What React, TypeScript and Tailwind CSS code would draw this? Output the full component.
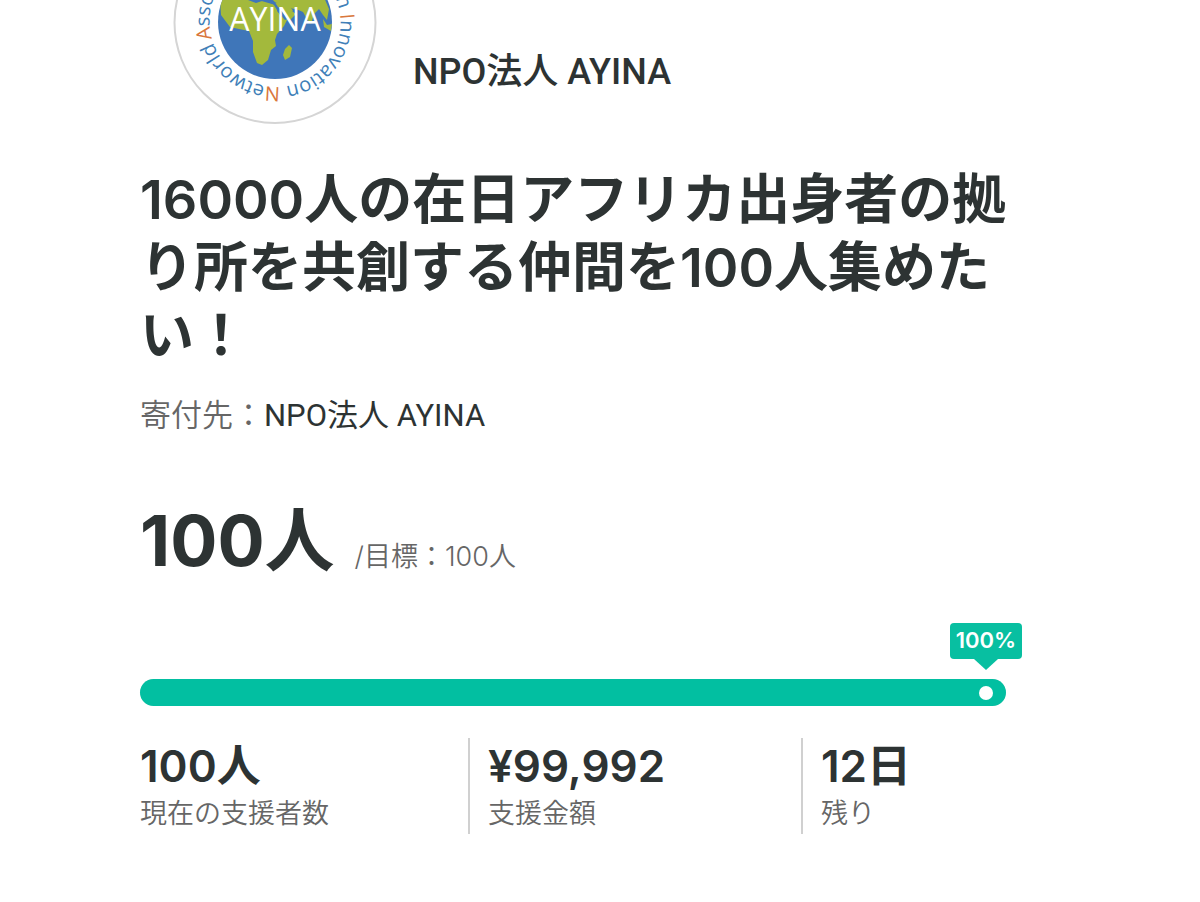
const supporters = 100;
const goal = 100;
const percent = Math.round((supporters / goal) * 100);

const stats = [
  { label: '現在の支援者数', value: '100人' },
  { label: '支援金額', value: '¥99,992' },
  { label: '残り', value: '12日' },
];

function Logo() {
  return (
    <svg className="h-[125px] w-[204px] shrink-0" viewBox="0 79 204 125" role="img" aria-label="AYINA">
      <defs>
        <clipPath id="globe">
          <circle cx="102" cy="101" r="57" />
        </clipPath>
        {/* Ring baseline, starting at -60 degrees and running clockwise */}
        <path id="ring" d="M134 45.6 A64 64 0 1 1 70 156.4 A64 64 0 1 1 134 45.6" />
      </defs>
      <circle cx="102" cy="101.5" r="100.5" fill="#fff" stroke="#d5d5d5" strokeWidth="2" />
      <circle cx="102" cy="101" r="57" fill="#3f76b9" />
      <g clipPath="url(#globe)" fill="#a3b93c">
        <path d="M47 79 L75 79 L83 82 L92 79 L101 84 L107 94 L116 95 L111 105 L104 113 L102 119 L103 125 L98 129 L95 139 L89 144 L84 142 L80 131 L80 120 L76 110 L66 108 L57 106 L48 94 Z" />
        <path d="M93 74 L150 74 L156 88 L154 99 L150 94 L146 88 L141 93 L138 103 L134 98 L130 91 L123 88 L119 90 L123 93 L117 99 L112 96 L105 86 L101 80 Z" />
        <path d="M116 124 L119 127 L117 136 L112 139 L110 134 L112 128 Z" />
        <path d="M150 98 L154 104 L159 103 L158 110 L151 106 Z" />
      </g>
      <path d="M85 79 L96 79 L104 82 L99 83 L92 81 Z M105 86 L115 98 L112 99 L104 90 Z M118 87 L126 90 L122 92 Z" fill="#3f76b9" />
      <text x="102" y="110" textAnchor="middle" fontSize="32" fontWeight="500" fill="#fff" fontFamily="'Open Sans', 'Noto Sans', sans-serif">AYINA</text>
      <g fontSize="20" fontWeight="500" fill="#407fb8" fontFamily="'Open Sans', 'Noto Sans', sans-serif">
        <text><textPath href="#ring" startOffset="43">n</textPath></text>
        <text><textPath href="#ring" startOffset="60"><tspan fill="#d9773c">I</tspan>nnovation</textPath></text>
        <text><textPath href="#ring" startOffset="165"><tspan fill="#d9773c">N</tspan>etworld</textPath></text>
        <text><textPath href="#ring" startOffset="255"><tspan fill="#d9773c">A</tspan>sso</textPath></text>
      </g>
    </svg>
  );
}

export default function App() {
  return (
    <main className="bg-white pr-[194px] pl-[140px] font-['Inter','Noto_Sans_CJK_JP',sans-serif] text-[#2d3333]" lang="ja">
      <header className="flex items-end gap-9 pl-[33px]">
        <Logo />
        <p className="pb-[35px] font-['Roboto','Noto_Sans_CJK_JP',sans-serif] text-4xl leading-9 font-medium">NPO法人 AYINA</p>
      </header>

      <h1 className="-mr-2 mt-[41px] text-[54px] leading-[68px] font-semibold">
        16000人の在日アフリカ出身者の拠り所を共創する仲間を100人集めたい！
      </h1>

      <p className="mt-[26px] font-['Roboto','Noto_Sans_CJK_JP',sans-serif] text-[31px] leading-10">
        <span className="font-[350] text-[#666]">寄付先：</span>
        NPO法人 AYINA
      </p>

      <p className="mt-[55px] flex items-baseline gap-5">
        <strong className="text-[70px] leading-[100px] font-bold">100人</strong>
        <span className="text-[27px] font-[350] text-[#666]">/目標：100人</span>
      </p>

      <div className="relative mt-[88px] h-[27px] rounded-full bg-[#e5e5e5]" role="progressbar" aria-valuenow={percent} aria-valuemin={0} aria-valuemax={100} aria-label="達成率">
        <div className="flex h-full items-center justify-end rounded-full bg-[#02bfa1] pr-[13px]" style={{ width: `${percent}%` }}>
          <span className="relative size-3.5 rounded-full bg-white">
            <span className="absolute bottom-[41px] left-1/2 flex h-9 w-[72px] -translate-x-1/2 items-center justify-center rounded bg-[#08bfa1] text-[22px] font-semibold text-white">
              {percent}%
              <svg className="absolute top-full left-1/2 h-[11px] w-6 -translate-x-1/2" viewBox="0 0 24 11" fill="#08bfa1">
                <path d="M0 0 H24 L12 11 Z" />
              </svg>
            </span>
          </span>
        </div>
      </div>

      <dl className="mt-8 grid grid-cols-[328fr_333fr_205fr]">
        {stats.map((stat) => (
          <div key={stat.label} className="flex h-24 flex-col-reverse justify-end border-l-2 border-[#d0d0d0] pl-[18px] first:border-l-0 first:pl-0">
            <dt className="text-[27px] leading-10 font-[350] text-[#666]">{stat.label}</dt>
            <dd className="text-[44px] leading-[56px] font-semibold">{stat.value}</dd>
          </div>
        ))}
      </dl>
    </main>
  );
}
